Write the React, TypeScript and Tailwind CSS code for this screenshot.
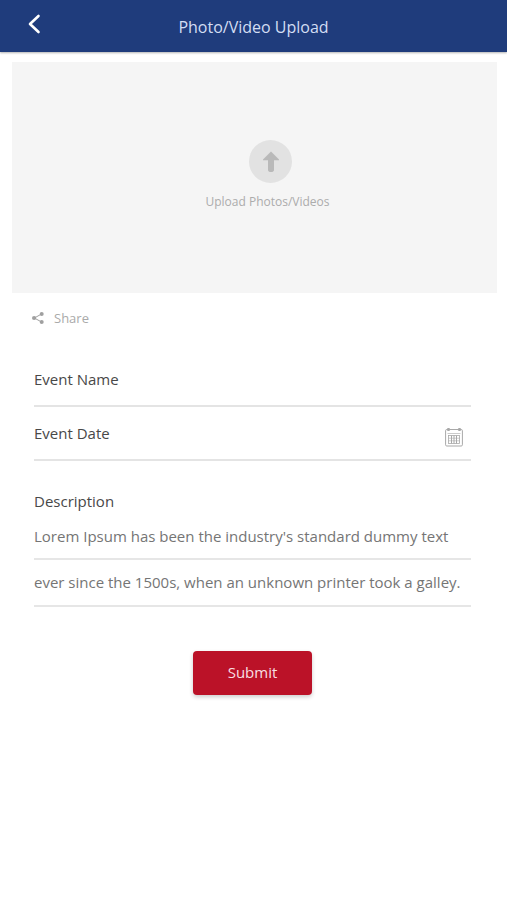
import React, { useState } from 'react';

const BackIcon = () => (
  <svg
    className="h-6 w-6"
    viewBox="0 0 24 24"
    fill="none"
    stroke="currentColor"
    strokeWidth="2.6"
    strokeLinecap="round"
    strokeLinejoin="round"
  >
    <path d="M16.5 4 8 12l8.5 8" />
  </svg>
);

const UploadIcon = () => (
  <svg className="h-6 w-6" viewBox="0 0 24 24" fill="currentColor">
    <path d="M12 1.6 20 9.4v.9h-5v9.8c0 1-.9 1.8-1.9 1.8h-2.2c-1 0-1.9-.8-1.9-1.8v-9.8H4v-.9z" />
  </svg>
);

const ShareIcon = () => (
  <svg className="h-3 w-3" viewBox="0 0 12 12" fill="currentColor">
    <path d="M9.5 2 2.4 6l7.1 4" fill="none" stroke="currentColor" />
    <circle cx="9.7" cy="2" r="2" />
    <circle cx="2.1" cy="6" r="2.1" />
    <circle cx="9.7" cy="10" r="2" />
  </svg>
);

const CalendarIcon = () => (
  <svg
    className="h-5 w-[18px]"
    viewBox="0 0 18 20"
    fill="none"
    stroke="currentColor"
  >
    <rect x=".6" y="2.5" width="16.8" height="16.5" rx="1.2" />
    <path d="M3.5 1v3M14.5 1v3" strokeWidth="2.4" />
    <path d="M2.5 6.5h13" strokeWidth=".6" />
    <rect x="3.5" y="8.5" width="11" height="8" strokeWidth=".8" />
    <path d="M6.5 8.5v8M9 8.5v8M11.5 8.5v8" />
    <path d="M3.5 11.2h11M3.5 13.8h11" strokeWidth=".6" />
  </svg>
);

const FieldRow: React.FC<{
  id: string;
  label: string;
  children?: React.ReactNode;
}> = ({ id, label, children }) => {
  const [value, setValue] = useState('');

  return (
    <div className="flex h-[54px] items-center border-b-2 border-[#e4e4e4]">
      <label htmlFor={id} className="text-[15px] leading-6 text-[#484848]">
        {label}
      </label>
      <input
        id={id}
        type="text"
        value={value}
        onChange={e => setValue(e.target.value)}
        className="h-full min-w-0 flex-1 px-3 text-[15px] text-[#757575] outline-none"
      />
      {children}
    </div>
  );
};

export default function App() {
  const [description, setDescription] = useState(
    "Lorem Ipsum has been the industry's standard dummy text ever since the 1500s, when an unknown printer took a galley."
  );

  return (
    <div className="min-h-screen bg-white font-['Open_Sans',sans-serif]">
      <header className="grid h-[52px] grid-cols-[48px_1fr_48px] items-center bg-[#1f3c7c] text-white shadow-[0_1px_2px_rgba(0,0,0,0.3)]">
        <button type="button" aria-label="Back" className="pb-1 pl-[22px]">
          <BackIcon />
        </button>
        <h1 className="pt-px text-center text-base text-[#d3def3]">
          Photo/Video Upload
        </h1>
      </header>

      <main>
        <label className="mt-[10px] mr-[10px] ml-3 flex h-[231px] cursor-pointer flex-col items-center bg-[#f5f5f5] pt-[78px] pl-8">
          <input type="file" accept="image/*,video/*" multiple className="sr-only" />
          <span className="flex h-[43px] w-[43px] items-center justify-center rounded-full bg-[#e2e2e2] text-[#b9b9b9]">
            <UploadIcon />
          </span>
          <span className="mt-[10px] pr-1.5 text-xs leading-[18px] text-[#acacac]">
            Upload Photos/Videos
          </span>
        </label>

        <form className="pr-9 pl-[34px]" onSubmit={e => e.preventDefault()}>
          <button
            type="button"
            className="-ml-0.5 flex h-[50px] items-center gap-[10px] text-[#a0a0a0]"
          >
            <ShareIcon />
            <span className="pt-px text-[13px] text-[#aaaaaa]">Share</span>
          </button>

          <div className="mt-[10px]">
            <FieldRow id="event-name" label="Event Name" />
            <FieldRow id="event-date" label="Event Date">
              <button
                type="button"
                aria-label="Pick a date"
                className="mr-2 pt-2 text-[#a8a8a8]"
              >
                <CalendarIcon />
              </button>
            </FieldRow>
          </div>

          <label
            htmlFor="description"
            className="mt-7 block text-[15px] leading-6 text-[#484848]"
          >
            Description
          </label>
          {/* ruled paper: one rule under every line of text */}
          <textarea
            id="description"
            rows={2}
            value={description}
            onChange={e => setDescription(e.target.value)}
            className="block h-[94px] w-full resize-none overflow-hidden bg-[linear-gradient(to_bottom,transparent_45px,#e6e6e6_45px)] bg-[length:100%_47px] text-[15px] leading-[46px] text-[#757575] outline-none"
          />

          <div className="mt-11 flex justify-center">
            <button
              type="submit"
              className="h-11 w-[119px] rounded bg-[#bb1228] pb-0.5 text-[15px] text-[#f8dfe2] shadow-[0_2px_4px_rgba(0,0,0,0.2)]"
            >
              Submit
            </button>
          </div>
        </form>
      </main>
    </div>
  );
}
